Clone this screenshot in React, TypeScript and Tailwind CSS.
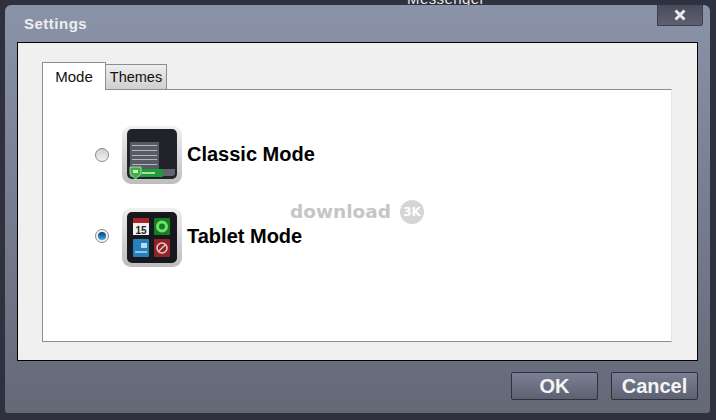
import React from "react";

const sans = "font-['Liberation_Sans',Arial,sans-serif]";

function ClassicIcon() {
  return (
    <svg width="60" height="58" viewBox="0 0 60 58" className="shrink-0">
      <defs>
        <linearGradient id="frameA" x1="0" y1="0" x2="0" y2="1">
          <stop offset="0" stopColor="#f1f1f1" />
          <stop offset="1" stopColor="#bdbdbd" />
        </linearGradient>
      </defs>
      <rect width="60" height="58" rx="9" fill="url(#frameA)" />
      <rect x="5" y="3" width="50" height="50" rx="5" fill="#22232a" />
      <rect x="8" y="16" width="29" height="30" fill="#585b66" />
      <path d="M10 19.500h25M10 24.500h25M10 29.500h25M10 33.500h25M10 38.500h25" stroke="#b4b7be" strokeWidth="1.200" />
      <path d="M8 43h45v4a3 3 0 0 1-3 3H8z" fill="#62656f" />
      <rect x="8" y="43" width="33" height="8" rx="1" fill="#1f9b38" />
      <rect x="20" y="46" width="13" height="2" fill="#a8dcae" />
      <path d="M8 41h11v7l-5.500 5-5.500-5z" fill="#3fae45" stroke="#c3e8bd" strokeWidth="0.800" />
      <path d="M11 44h5v3h-5z" fill="#c9efc6" />
    </svg>
  );
}

function TabletIcon() {
  return (
    <svg width="60" height="59" viewBox="0 0 60 59" className="shrink-0">
      <defs>
        <linearGradient id="frameB" x1="0" y1="0" x2="0" y2="1">
          <stop offset="0" stopColor="#efefef" />
          <stop offset="1" stopColor="#bcbcbc" />
        </linearGradient>
      </defs>
      <rect width="60" height="59" rx="9" fill="url(#frameB)" />
      <rect x="5" y="4" width="50" height="51" rx="5" fill="#17181d" />
      <rect x="11" y="10" width="16" height="17" fill="#f2f2f2" />
      <rect x="11" y="10" width="16" height="5" fill="#a9252b" />
      <text x="19" y="25.500" textAnchor="middle" fontSize="10" fontWeight="700" fill="#222">15</text>
      <rect x="32" y="10" width="16" height="17" rx="1" fill="#167d24" />
      <circle cx="40" cy="18.500" r="4.500" fill="none" stroke="#6fe06a" strokeWidth="3" />
      <rect x="11" y="31" width="16" height="18" rx="1" fill="#2580bd" />
      <rect x="19" y="35" width="6" height="5" fill="#b9dcf0" />
      <rect x="13" y="43" width="12" height="2" fill="#8cc2e4" />
      <rect x="32" y="31" width="16" height="18" rx="1" fill="#8f2529" />
      <circle cx="40" cy="40" r="5" fill="none" stroke="#eec9c9" strokeWidth="1.500" />
      <path d="M36.500 43.500l7-7" stroke="#eec9c9" strokeWidth="1.500" />
    </svg>
  );
}

function Radio({ on }: { on?: boolean }) {
  return (
    <div
      className={`mr-[13px] flex size-[14px] shrink-0 items-center justify-center rounded-full border border-[#8a8a8a] ${
        on ? "mb-[4px] bg-[#eef2f6]" : "bg-gradient-to-b from-[#cfcfcf] to-[#f2f2f2]"
      }`}
    >
      {on && <div className="size-2 rounded-full bg-gradient-to-b from-[#12416b] to-[#39ace8]" />}
    </div>
  );
}

function ModeRow({ on, label, icon }: { on?: boolean; label: string; icon: React.ReactNode }) {
  return (
    <div className="flex items-center">
      <Radio on={on} />
      {icon}
      <span className={`ml-[5px] text-[20px] leading-none font-bold text-black ${on ? "mb-[3px]" : "mb-[2px]"}`}>{label}</span>
    </div>
  );
}

function FooterButton({ label }: { label: string }) {
  return (
    <button className="h-[28px] w-[87px] rounded-[2px] border border-[#2e313c] bg-gradient-to-b from-[#7a8093] to-[#5c6172] text-[20px] leading-none font-bold text-[#f4f4f4]">
      {label}
    </button>
  );
}

export default function App() {
  return (
    <div className={`${sans} relative h-[420px] w-[716px] overflow-hidden bg-[#2f323e] pt-[5px] pr-[6px] pb-[7px] pl-[5px]`}>
      <span className="absolute top-[-12px] left-[407px] text-[15px] tracking-[0.4px] text-[#e8e8e8]">Messenger</span>

      <div className="relative flex h-full flex-col rounded-t-[6px] rounded-b-[3px] bg-gradient-to-b from-[#8a93a8] via-[#777d90] to-[#646978] px-[12px]">
        <div className="flex h-[37px] shrink-0 items-center pt-[2px] pl-[7px] text-[15px] font-bold tracking-[0.5px] text-[#eceef2]">
          Settings
        </div>

        {/* close button */}
        <div className="absolute top-0 right-[7px] flex h-[21px] w-[46px] items-center justify-center rounded-br-[3px] border-x border-b border-[#3d404c] bg-gradient-to-b from-[#474b5a] to-[#5d6172]">
          <svg width="14" height="14" viewBox="0 0 14 14">
            <path d="M2.500 2.500l9 9M11.500 2.500l-9 9" stroke="#e8eaee" strokeWidth="3" />
          </svg>
        </div>

        <div className="flex h-[319px] flex-col border border-black bg-[#f0f0f0] pt-[19px] pr-[25px] pb-[18px] pl-[24px]">
          <div className="relative z-10 -mb-px flex h-[28px] shrink-0 items-end text-[15px] leading-none">
            <div className="flex h-[28px] w-[64px] items-center justify-center border-x border-t border-[#8b8d93] bg-white text-[#111]">
              Mode
            </div>
            <div className="flex h-[26px] w-[61px] items-center justify-center border-t border-r border-b border-[#8b8d93] bg-gradient-to-b from-[#eeeeee] to-[#cfcfcf] text-[14.500px] text-[#111]">
              Themes
            </div>
          </div>
          <div className="relative flex flex-1 flex-col border border-[#8b8d93] border-r-[#e4e4e4] bg-white pt-[36px] pl-[52px]">
            <div className="flex flex-col gap-[24px]">
              <ModeRow label="Classic Mode" icon={<ClassicIcon />} />
              <ModeRow on label="Tablet Mode" icon={<TabletIcon />} />
            </div>
            {/* watermark */}
            <div className="absolute top-[110px] left-[247px] flex items-center gap-[9px] font-['DejaVu_Sans',sans-serif] text-[18.500px] leading-none font-bold text-[#c6c6c6]">
              download
              <span className="flex size-[24px] items-center justify-center rounded-full bg-[#d5d5d5] text-[12px] text-white">3K</span>
            </div>
          </div>
        </div>

        <div className="flex flex-1 items-center justify-end gap-[13px] pb-[2px]">
          <FooterButton label="OK" />
          <FooterButton label="Cancel" />
        </div>
      </div>
    </div>
  );
}
